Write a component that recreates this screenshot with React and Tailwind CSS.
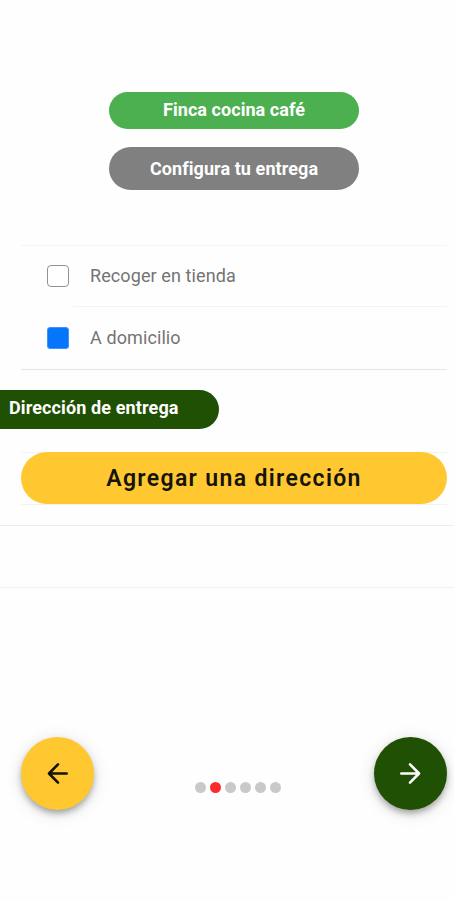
import React from 'react'
import clsx from 'clsx'

const deliveryOptions = [
  { id: 'store', label: 'Recoger en tienda', checked: false },
  { id: 'home', label: 'A domicilio', checked: true },
]

const steps = [1, 2, 3, 4, 5, 6]
const currentStep = 2

const ArrowIcon = ({ className }) => (
  <svg
    viewBox="0 0 24 24"
    className={className}
    fill="none"
    stroke="currentColor"
    strokeWidth="2.5"
    strokeLinecap="round"
    strokeLinejoin="round"
  >
    <path d="M12.5 3.2 3.8 12l8.7 8.8M3.8 12h17" />
  </svg>
)

const Checkbox = ({ checked }) => (
  <span
    className={clsx(
      'block size-[22px] shrink-0',
      checked ? 'rounded-[3px] border border-[#3b93fb] bg-[#0575fb]' : 'rounded-[4px] border-[1.5px] border-[#929292] bg-white'
    )}
  />
)

const App = () => {
  return (
    <main className="h-[900px] w-[454px] overflow-hidden bg-[#fefefe] pt-[92px] font-['Roboto','Liberation_Sans',sans-serif]">
      <header className="ml-[109px] flex w-[250px] flex-col gap-[18px] text-center text-[18px] font-bold text-white">
        <h1 className="h-[37px] rounded-full bg-[#4caf50] leading-[36px] tracking-[0.05px]">Finca cocina café</h1>
        <h2 className="h-[43px] rounded-full bg-[#808080] leading-[43px] tracking-[0.08px]">Configura tu entrega</h2>
      </header>

      <ul className="mt-[55px] mr-[7px] ml-[21px] border-y border-t-[#f5f5f5] border-b-[#e6e6e6]">
        {deliveryOptions.map((item, index) => (
          <li key={item.id} className="flex pl-[26px]">
            <span className={clsx('flex w-[26px] items-center pb-px', index === 0 ? 'h-[61px]' : 'h-[62px]')}>
              <Checkbox checked={item.checked} />
            </span>
            <span
              className={clsx(
                'flex grow items-center pb-[2px] pl-[17px] text-[18px] tracking-[0.1px] text-[#747474]',
                index === 0 ? 'h-[61px] border-b border-[#f3f3f3]' : 'h-[62px]'
              )}
            >
              {item.label}
            </span>
          </li>
        ))}
      </ul>

      <h3 className="mt-[20px] h-[39px] w-[219px] rounded-r-full bg-[#1f5003] pl-[9px] text-[18px] leading-[36px] font-bold tracking-[0.12px] text-white">
        Dirección de entrega
      </h3>

      <div className="mt-[23px] mr-[7px] ml-[21px] h-[53px] border-y border-[#f3f3f3]">
        <button className="-mt-px block h-[52px] w-full rounded-full bg-[#ffc831] pt-[2px] text-center text-[23px] font-semibold tracking-[1.35px] text-[#14130c]">
          Agregar una dirección
        </button>
      </div>

      <div className="mt-[20px] h-[63px] border-y border-t-[#ededed] border-b-[#f0f0f0]" />

      <footer className="mt-[149px] flex items-start justify-between pr-[7px] pl-[21px]">
        <button
          aria-label="Anterior"
          className="flex size-[73px] items-center justify-center rounded-full bg-[#ffc831] text-[#14130c] shadow-[0_4px_7px_-1px_rgba(0,0,0,0.35),0_3px_18px_rgba(0,0,0,0.12)]"
        >
          <ArrowIcon className="size-[25px]" />
        </button>
        <div className="mt-[45px] ml-[8px] flex gap-1">
          {steps.map((step) => (
            <span
              key={step}
              className={clsx('size-[11px] rounded-full', step === currentStep ? 'bg-[#f92c2b]' : 'bg-[#c9c9c9]')}
            />
          ))}
        </div>
        <button
          aria-label="Siguiente"
          className="flex size-[73px] items-center justify-center rounded-full bg-[#1f5003] text-white shadow-[0_4px_7px_-1px_rgba(0,0,0,0.35),0_3px_18px_rgba(0,0,0,0.12)]"
        >
          <ArrowIcon className="size-[25px] rotate-180" />
        </button>
      </footer>
    </main>
  )
}

export default App
